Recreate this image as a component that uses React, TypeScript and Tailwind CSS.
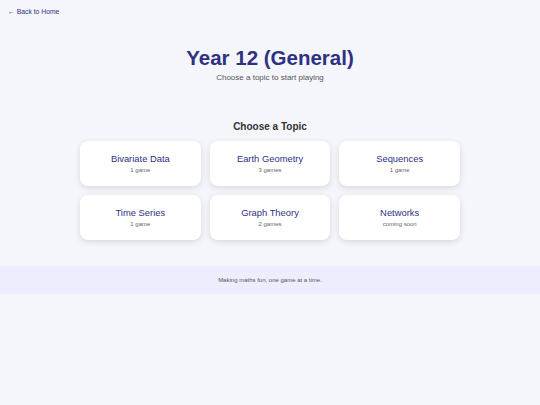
import React from "react";

const topics = [
  { name: "Bivariate Data", sub: "1 game" },
  { name: "Earth Geometry", sub: "3 games" },
  { name: "Sequences", sub: "1 game" },
  { name: "Time Series", sub: "1 game" },
  { name: "Graph Theory", sub: "2 games" },
  { name: "Networks", sub: "coming soon" },
];

export default function App() {
  return (
    <div
      className="min-h-[405px] w-full bg-[#f5f6fb] flex flex-col"
      style={{ fontFamily: '"Liberation Sans", Arial, sans-serif' }}
    >
      <div className="px-2 h-[24px] flex items-center">
        <a className="text-[6.8px] text-[#2e3182] leading-[10px]">← Back to Home</a>
      </div>
      <div className="flex flex-col items-center">
        <h1 className="mt-[22px] text-[20.5px] font-bold text-[#2e3182] leading-[24px]">
          Year 12 (General)
        </h1>
        <p className="mt-[3px] text-[8px] text-[#555] leading-[10px]">
          Choose a topic to start playing
        </p>
        <h2 className="mt-[38px] text-[10px] font-bold text-[#333] leading-[12px]">
          Choose a Topic
        </h2>
        <div className="mt-[8px] grid grid-cols-3 gap-[9px] w-[380px]">
          {topics.map((t) => (
            <div
              key={t.name}
              className="h-[45px] bg-white rounded-[8px] shadow-[0_2px_6px_rgba(0,0,0,0.12)] flex flex-col items-center justify-center"
            >
              <div className="text-[9.4px] text-[#2e3182] leading-[11px]">{t.name}</div>
              <div className="mt-[2.5px] text-[6px] text-[#666] leading-[8px]">{t.sub}</div>
            </div>
          ))}
        </div>
      </div>
      <footer className="mt-[26px] h-[28px] bg-[#eceefd] flex items-center justify-center">
        <span className="text-[6px] text-[#555]">Making maths fun, one game at a time.</span>
      </footer>
    </div>
  );
}
